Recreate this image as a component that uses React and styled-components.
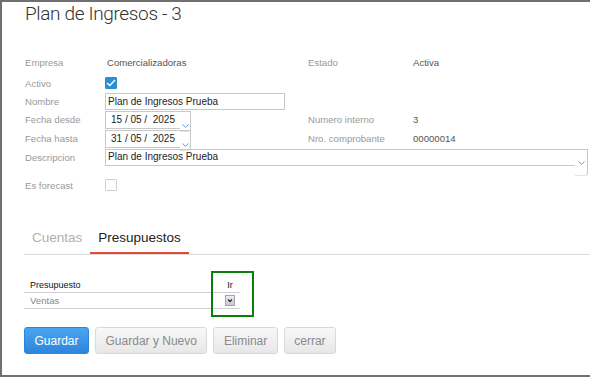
import React from "react";
import styled, { createGlobalStyle } from "styled-components";

const GlobalStyle = createGlobalStyle`
  body {
    margin: 0;
    background: #fff;
    font-family: "Liberation Sans", Arial, sans-serif;
  }
`;

const Frame = styled.div`
  position: relative;
  box-sizing: border-box;
  width: 590px;
  height: 377px;
  border: 2px solid #707070;
  border-right: none;
  padding-left: 22px;
  background: #fff;
  overflow: hidden;
`;

const Title = styled.h1`
  margin: 0 0 0 1px;
  height: 50px;
  font-family: Roboto, "Liberation Sans", sans-serif;
  font-weight: 300;
  font-size: 19px;
  line-height: 24px;
  letter-spacing: -0.35px;
  color: #333;
`;

const Row = styled.div`
  display: grid;
  grid-template-columns: 81px 202px 104px 1fr;
  grid-template-rows: ${(p) => p.$h}px;
  align-items: center;
  height: ${(p) => p.$h}px;
  margin-top: ${(p) => p.$mt || 0}px;
`;

const Label = styled.span`
  padding-left: 1px;
  font-size: 9.6px;
  color: #9a9a9a;
`;

const Value = styled.span`
  padding-left: 2px;
  font-size: 9.6px;
  color: #555;
`;

const TextBox = styled.div`
  box-sizing: border-box;
  width: ${(p) => p.$w}px;
  height: 17px;
  border: 1px solid #c8c8c8;
  padding-left: 2px;
  font-size: 10px;
  line-height: 15px;
  color: #222;
  align-self: start;
`;

const DropField = styled.div`
  display: flex;
  align-items: flex-start;
  align-self: start;
  margin-top: 1px;
  width: ${(p) => p.$w}px;
  grid-column: ${(p) => (p.$wide ? "2 / -1" : "auto")};
`;

const DropText = styled.div`
  box-sizing: border-box;
  flex: 1;
  height: ${(p) => p.$h}px;
  border: 1px solid #c8c8c8;
  border-right: none;
  padding-left: ${(p) => p.$pl}px;
  font-size: 10px;
  line-height: ${(p) => p.$h - 3}px;
  color: #222;
  white-space: pre;
`;

const DropButton = styled.div`
  box-sizing: border-box;
  display: flex;
  align-items: flex-end;
  justify-content: center;
  width: ${(p) => p.$w}px;
  height: ${(p) => p.$h}px;
  padding-bottom: ${(p) => p.$pb}px;
  border: 1px solid #c8c8c8;
  border-left: none;
  border-bottom-color: #e2e2e2;
  border-radius: 0 0 3px 0;
`;

const Check = styled.div`
  box-sizing: border-box;
  width: 12px;
  height: 12px;
  border: 1px solid ${(p) => (p.$on ? "#2b8fd6" : "#cfcfcf")};
  background: ${(p) => (p.$on ? "#2b8fd6" : "#fff")};
  border-radius: 1px;
  display: flex;
  align-items: center;
  justify-content: center;
`;

const TabBar = styled.div`
  display: flex;
  margin-top: 28px;
  border-bottom: 1px solid #dcdcdc;
`;

const Tab = styled.div`
  padding: 6px 8px 5px;
  font-size: 13.5px;
  line-height: 18px;
  color: ${(p) => (p.$active ? "#222" : "#b0b0b0")};
  border-bottom: 2px solid ${(p) => (p.$active ? "#e34b38" : "transparent")};
`;

const Table = styled.div`
  width: 216px;
  margin-top: 23px;
`;

const TableRow = styled.div`
  display: grid;
  grid-template-columns: 1fr 20px;
  align-items: center;
  height: ${(p) => p.$h}px;
  border-bottom: 1px solid #d0d0d0;
`;

const Cell = styled.span`
  padding-left: 6px;
  font-size: ${(p) => (p.$head ? 9 : 9.6)}px;
  color: ${(p) => (p.$head ? "#111" : "#888")};
`;

const CenterCell = styled.span`
  display: flex;
  justify-content: center;
  font-size: 9px;
  color: #111;
`;

const Highlight = styled.div`
  position: absolute;
  left: 209px;
  top: 269px;
  box-sizing: border-box;
  width: 43px;
  height: 46px;
  border: 2px solid #0a7f0a;
`;

const Actions = styled.div`
  display: flex;
  gap: 6px;
  margin-top: 18px;
`;

const Button = styled.button`
  box-sizing: border-box;
  height: 27px;
  padding: 0 9.5px;
  border-radius: 3px;
  font-family: "Liberation Sans", Arial, sans-serif;
  font-size: 12px;
  color: ${(p) => (p.$primary ? "#fff" : "#8a8a8a")};
  border: 1px solid ${(p) => (p.$primary ? "#2f84d6" : "#d9d9d9")};
  background: ${(p) =>
    p.$primary
      ? "linear-gradient(#4aa5f0, #2d85dd)"
      : "linear-gradient(#f8f8f8, #e7e7e7)"};
`;

const Chevron = () => (
  <svg width="7" height="4" viewBox="0 0 7 4">
    <polyline points="0.5,0.5 3.5,3.3 6.5,0.5" fill="none" stroke="#5b9bd8" strokeWidth="1" />
  </svg>
);

const Tick = () => (
  <svg width="10" height="8" viewBox="0 0 10 8">
    <polyline points="1,4 3.8,6.6 9,1" fill="none" stroke="#fff" strokeWidth="1.4" />
  </svg>
);

const SelectIcon = () => (
  <svg width="10" height="11" viewBox="0 0 10 11">
    <defs>
      <linearGradient id="sel" x1="0" y1="0" x2="0" y2="1">
        <stop offset="0" stopColor="#eeeef3" />
        <stop offset="1" stopColor="#c6c6d0" />
      </linearGradient>
    </defs>
    <rect x="0.5" y="0.5" width="9" height="10" fill="url(#sel)" stroke="#a2a2aa" />
    <polyline points="3,4.5 5,6.5 7,4.5" fill="none" stroke="#333" strokeWidth="1.3" />
  </svg>
);

export default function App() {
  return (
    <>
      <GlobalStyle />
      <Frame>
        <Title>Plan de Ingresos - 3</Title>

        <Row $h={21}>
          <Label>Empresa</Label>
          <Value>Comercializadoras</Value>
          <Label>Estado</Label>
          <Value>Activa</Value>
        </Row>
        <Row $h={20}>
          <Label>Activo</Label>
          <Check $on>
            <Tick />
          </Check>
        </Row>
        <Row $h={17}>
          <Label>Nombre</Label>
          <TextBox $w={180}>Plan de Ingresos Prueba</TextBox>
        </Row>
        <Row $h={19}>
          <Label>Fecha desde</Label>
          <DropField $w={86}>
            <DropText $h={18} $pl={5}>15 / 05 /  2025</DropText>
            <DropButton $w={11} $h={21} $pb={3}>
              <Chevron />
            </DropButton>
          </DropField>
          <Label>Numero interno</Label>
          <Value>3</Value>
        </Row>
        <Row $h={19}>
          <Label>Fecha hasta</Label>
          <DropField $w={86}>
            <DropText $h={18} $pl={5}>31 / 05 /  2025</DropText>
            <DropButton $w={11} $h={21} $pb={3}>
              <Chevron />
            </DropButton>
          </DropField>
          <Label>Nro. comprobante</Label>
          <Value>00000014</Value>
        </Row>
        <Row $h={18}>
          <Label>Descripcion</Label>
          <DropField $w={483} $wide>
            <DropText $h={17} $pl={2}>Plan de Ingresos Prueba</DropText>
            <DropButton $w={13} $h={27} $pb={10}>
              <Chevron />
            </DropButton>
          </DropField>
        </Row>
        <Row $h={20} $mt={9}>
          <Label>Es forecast</Label>
          <Check />
        </Row>

        <TabBar>
          <Tab>Cuentas</Tab>
          <Tab $active>Presupuestos</Tab>
        </TabBar>

        <Table>
          <TableRow $h={14}>
            <Cell $head>Presupuesto</Cell>
            <CenterCell>Ir</CenterCell>
          </TableRow>
          <TableRow $h={15}>
            <Cell>Ventas</Cell>
            <CenterCell>
              <SelectIcon />
            </CenterCell>
          </TableRow>
        </Table>
        <Highlight />

        <Actions>
          <Button $primary>Guardar</Button>
          <Button>Guardar y Nuevo</Button>
          <Button>Eliminar</Button>
          <Button>cerrar</Button>
        </Actions>
      </Frame>
    </>
  );
}
